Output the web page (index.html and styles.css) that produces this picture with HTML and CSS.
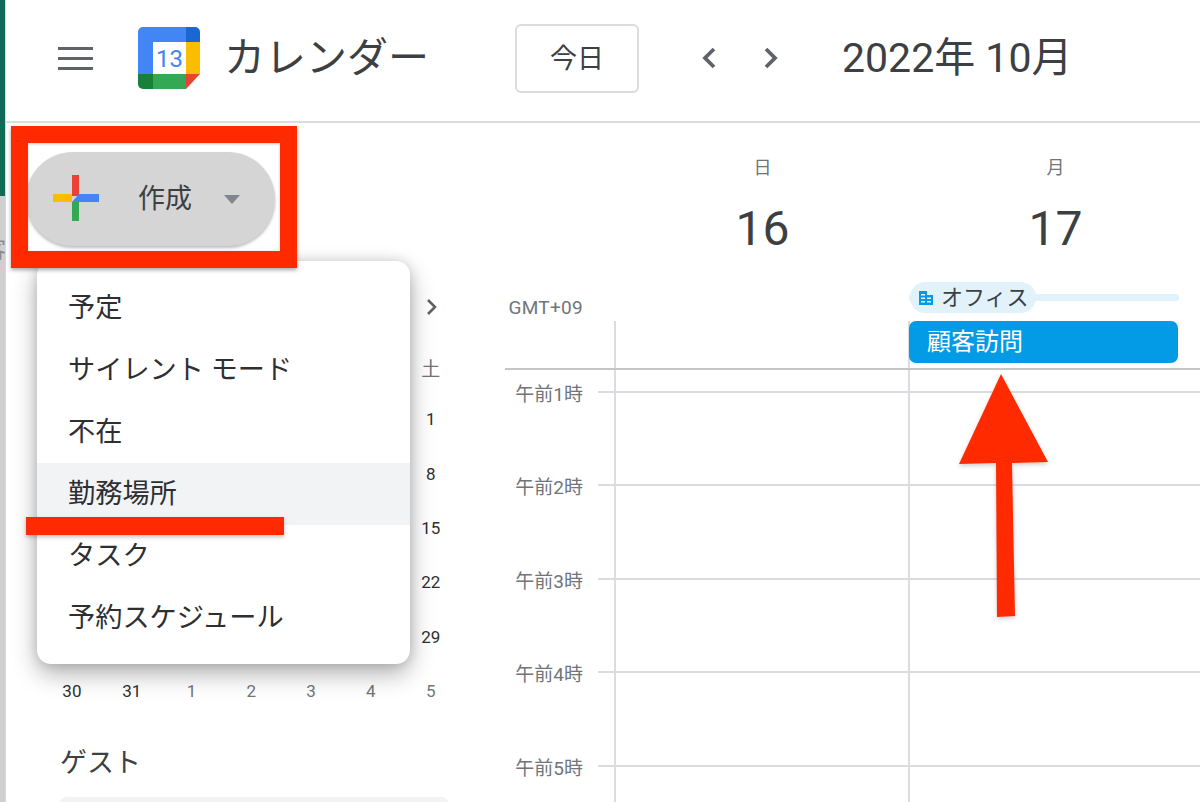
FILE: index.html
```html
<!DOCTYPE html>
<html lang="ja">
<head>
    <meta charset="UTF-8">
    <title>カレンダー</title>
    <link rel="stylesheet" href="styles.css">
</head>
<body>

<div class="page">
    <div class="desk-strip">
        <div class="desk-green"></div>
        <div class="desk-gray"><span class="desk-char">客</span></div>
    </div>

    <div class="app">
        <header class="topbar">
            <div class="hamburger"><span></span><span></span><span></span></div>
            <svg class="logo" viewBox="0 0 62 62" width="62" height="62">
                <path d="M5 0H48V15H15V47H0V5A5 5 0 0 1 5 0Z" fill="#4285f4"/>
                <path d="M48 0H57A5 5 0 0 1 62 5V15H48Z" fill="#1967d2"/>
                <rect x="48" y="15" width="14" height="32" fill="#fbbc04"/>
                <rect x="15" y="47" width="33" height="15" fill="#34a853"/>
                <path d="M0 47H15V62H5A5 5 0 0 1 0 57Z" fill="#188038"/>
                <path d="M48 47H62L48 62Z" fill="#ea4335"/>
                <rect x="15" y="15" width="33" height="32" fill="#fff"/>
                <text x="31.5" y="40" text-anchor="middle" class="logo-num">13</text>
            </svg>
            <div class="app-name">カレンダー</div>
            <button class="today-btn">今日</button>
            <svg class="nav-arrow first" viewBox="0 0 16 24" width="16" height="24"><path d="M13 3L4 12L13 21" fill="none" stroke="#5f6368" stroke-width="3.8"/></svg>
            <svg class="nav-arrow" viewBox="0 0 16 24" width="16" height="24"><path d="M3 3L12 12L3 21" fill="none" stroke="#5f6368" stroke-width="3.8"/></svg>
            <div class="month-title">2022年 10月</div>
        </header>

        <div class="content">
            <aside class="sidebar">
                <button class="create-btn">
                    <svg class="plus" viewBox="0 0 46 46" width="46" height="46">
                        <rect x="19" y="0" width="7" height="21" fill="#ea4335"/>
                        <rect x="0" y="19" width="19" height="8" fill="#fbbc04"/>
                        <rect x="19" y="27" width="7" height="19" fill="#34a853"/>
                        <path d="M19 27L26 19H46V27Z" fill="#4285f4"/>
                    </svg>
                    <span class="create-label">作成</span>
                    <span class="create-caret"></span>
                </button>

                <div class="mini-nav">
                    <svg viewBox="0 0 14 20" width="14" height="20"><path d="M3 3L10 10L3 17" fill="none" stroke="#5f6368" stroke-width="2.6"/></svg>
                </div>

                <div class="mini-cal">
                    <div class="blank"></div><div class="wd">土</div>
                    <div class="blank"></div><div>1</div>
                    <div class="blank"></div><div>8</div>
                    <div class="blank"></div><div>15</div>
                    <div class="blank"></div><div>22</div>
                    <div class="blank"></div><div>29</div>
                    <div>30</div><div>31</div><div class="off">1</div><div class="off">2</div><div class="off">3</div><div class="off">4</div><div class="off">5</div>
                </div>

                <h3 class="guest-title">ゲスト</h3>
                <div class="guest-search"></div>
            </aside>

            <main class="calendar">
                <div class="day-head">
                    <div></div>
                    <div class="day-col"><div class="day-name">日</div><div class="day-num">16</div></div>
                    <div class="day-col"><div class="day-name">月</div><div class="day-num">17</div></div>
                </div>

                <div class="allday">
                    <div class="tz">GMT+09</div>
                    <div class="chip-cell"></div>
                    <div class="chip-cell">
                        <div class="office-bar"></div>
                        <div class="office-chip">
                            <svg viewBox="0 0 16 16" width="16" height="16">
                                <path d="M1 1H9V5H15V15H1Z" fill="#039be5"/>
                                <path d="M3 4H7V5.5H3ZM3 7.5H7V9H3ZM9 7.5H13V9H9ZM3 11H7V12.5H3ZM9 11H13V12.5H9Z" fill="#e1f2fb"/>
                            </svg>
                            <span>オフィス</span>
                        </div>
                    </div>
                    <div class="event-cell"></div>
                    <div class="event-cell"><div class="event">顧客訪問</div></div>
                </div>

                <div class="hour-row lead"><div></div><div class="slot"></div><div class="slot"></div></div>
                <div class="hour-row"><div class="gutter"><span class="hour-label">午前1時</span><span class="tick"></span></div><div class="slot line"></div><div class="slot line"></div></div>
                <div class="hour-row"><div class="gutter"><span class="hour-label">午前2時</span><span class="tick"></span></div><div class="slot line"></div><div class="slot line"></div></div>
                <div class="hour-row"><div class="gutter"><span class="hour-label">午前3時</span><span class="tick"></span></div><div class="slot line"></div><div class="slot line"></div></div>
                <div class="hour-row"><div class="gutter"><span class="hour-label">午前4時</span><span class="tick"></span></div><div class="slot line"></div><div class="slot line"></div></div>
                <div class="hour-row"><div class="gutter"><span class="hour-label">午前5時</span><span class="tick"></span></div><div class="slot line"></div><div class="slot line"></div></div>
            </main>
        </div>
    </div>
</div>

<!-- dropdown over the sidebar -->
<div class="create-menu">
    <div class="menu-item">予定</div>
    <div class="menu-item">サイレント モード</div>
    <div class="menu-item">不在</div>
    <div class="menu-item active">勤務場所</div>
    <div class="menu-item">タスク</div>
    <div class="menu-item">予約スケジュール</div>
</div>

<!-- red annotations -->
<div class="mark-box"></div>
<div class="mark-line"></div>
<svg class="mark-arrow" viewBox="0 0 100 250" width="100" height="250">
    <path d="M46 3L4 93L41 92L42 246L60 245L57 92L93 91Z" fill="#ff2a00"/>
</svg>

</body>
</html>
```

FILE: styles.css
```css
* {
    box-sizing: border-box;
}
html, body {
    margin: 0;
    height: 100%;
    overflow: hidden;
}
body {
    font-family: Roboto, "Noto Sans CJK JP", sans-serif;
    background-color: #fff;
    color: #3c4043;
}
.page {
    display: flex;
    height: 802px;
}

/* sliver of the desktop behind the window */
.desk-strip {
    width: 6px;
    display: flex;
    flex-direction: column;
    border-right: 1px solid #d8d8d8;
    overflow: hidden;
}
.desk-green {
    height: 196px;
    background-color: #0f6a58;
}
.desk-gray {
    flex: 1;
    background-color: #cfcfcf;
    padding-top: 41px;
}
.desk-char {
    display: block;
    margin-left: -16px;
    font-size: 22px;
    line-height: 26px;
    color: #8a8a8a;
}

.app {
    flex: 1;
    min-width: 0;
}
.topbar {
    display: flex;
    align-items: center;
    height: 123px;
    padding-left: 52px;
    padding-bottom: 5px;
    border-bottom: 2px solid #dadce0;
}
.hamburger {
    width: 35px;
    display: flex;
    flex-direction: column;
    gap: 7px;
}
.hamburger span {
    height: 3px;
    background-color: #5f6368;
}
.logo {
    margin-left: 45px;
    flex-shrink: 0;
}
.logo-num {
    font-family: Roboto, sans-serif;
    font-size: 24px;
    fill: #4285f4;
}
.app-name {
    margin-left: 24px;
    font-size: 41px;
    line-height: 48px;
    width: 291px;
    white-space: nowrap;
}
.today-btn {
    width: 124px;
    height: 69px;
    padding-bottom: 4px;
    background-color: #fff;
    border: 2px solid #dadce0;
    border-radius: 6px;
    font-family: inherit;
    font-size: 27px;
    color: #3c4043;
}
.nav-arrow {
    margin-left: 46px;
}
.nav-arrow.first {
    margin-left: 62px;
}
.month-title {
    margin-left: 63px;
    margin-top: -8px;
    font-size: 41px;
    white-space: nowrap;
}

.content {
    display: flex;
    height: 679px;
    overflow: hidden;
}
.sidebar {
    width: 499px;
    flex-shrink: 0;
    padding-left: 20px;
}
.create-btn {
    display: flex;
    align-items: center;
    width: 249px;
    height: 94px;
    margin-top: 29px;
    padding: 0 0 0 27px;
    border: none;
    border-radius: 47px;
    background-color: #d5d5d5;
    box-shadow: 0 2px 3px rgba(0, 0, 0, 0.25);
    font-family: inherit;
}
.plus {
    margin-top: -2px;
}
.create-label {
    margin-left: 39px;
    margin-top: -6px;
    font-size: 27px;
    color: #3c4043;
}
.create-caret {
    margin-left: 32px;
    border-left: 8px solid transparent;
    border-right: 8px solid transparent;
    border-top: 9px solid #80868b;
}
.mini-nav {
    display: flex;
    justify-content: flex-end;
    height: 30px;
    width: 413px;
    margin-top: 46px;
    padding-top: 5px;
}
.mini-cal {
    display: grid;
    grid-template-columns: repeat(7, 59.8px);
    grid-template-rows: 50px repeat(6, 54.4px);
    margin-left: 16px;
    margin-top: 20px;
    font-size: 17px;
    text-align: center;
    color: #2d2f33;
}
.mini-cal div {
    display: flex;
    align-items: center;
    justify-content: center;
}
/* the cells under the open menu stay empty */
.mini-cal .blank {
    grid-column: span 6;
}
.mini-cal .wd {
    font-size: 19px;
    color: #70757a;
}
.mini-cal .off {
    color: #70757a;
}
.guest-title {
    margin: 27px 0 0 34px;
    font-size: 27px;
    line-height: 36px;
    font-weight: 400;
}
.guest-search {
    width: 388px;
    height: 50px;
    margin: 16px 0 0 34px;
    border-radius: 6px;
    background-color: #f1f3f4;
}

.calendar {
    flex: 1;
    min-width: 0;
}
.day-head {
    display: grid;
    grid-template-columns: 111px 293px 293px;
    height: 159px;
}
.day-col {
    text-align: center;
}
.day-name {
    margin-top: 33px;
    font-size: 18px;
    line-height: 24px;
    color: #70757a;
}
.day-num {
    margin-top: 20px;
    font-size: 48px;
    line-height: 58px;
}
.allday {
    display: grid;
    grid-template-columns: 109px 294px 294px;
    grid-template-rows: 39px 47px;
    width: 695px;
    border-bottom: 2px solid #c4c6c8;
}
.tz {
    grid-row: span 2;
    width: 78px;
    padding-top: 15px;
    font-size: 19px;
    letter-spacing: 0.3px;
    line-height: 22px;
    text-align: right;
    color: #70757a;
}
.chip-cell {
    position: relative;
}
.office-chip {
    position: relative;
    display: inline-flex;
    align-items: center;
    gap: 7px;
    height: 31px;
    padding: 0 7px 0 8px;
    margin-left: 2px;
    border-radius: 16px;
    background-color: #e1f2fb;
    font-size: 22px;
    line-height: 28px;
    color: #3c4043;
    white-space: nowrap;
}
.office-bar {
    position: absolute;
    left: 1px;
    top: 12px;
    width: 270px;
    height: 7px;
    border-radius: 3px;
    background-color: #e1f2fb;
}
.event-cell {
    border-left: 2px solid #dadce0;
}
.event {
    width: 269px;
    height: 42px;
    margin-left: -1px;
    padding-left: 18px;
    border-radius: 7px;
    background-color: #039be5;
    color: #fff;
    font-size: 24px;
    line-height: 42px;
}
.hour-row {
    display: grid;
    grid-template-columns: 109px 294px 294px;
    height: 93.4px;
}
.hour-row.lead {
    height: 21px;
}
.slot {
    border-left: 2px solid #dadce0;
}
.slot.line {
    border-top: 2px solid #dadce0;
}
.gutter {
    display: flex;
    align-items: flex-start;
}
.hour-label {
    width: 78px;
    margin-top: -8px;
    font-size: 19px;
    line-height: 24px;
    text-align: right;
    color: #70757a;
    white-space: nowrap;
}
.tick {
    width: 16px;
    height: 2px;
    margin-left: 15px;
    background-color: #dadce0;
}

.create-menu {
    position: absolute;
    left: 37px;
    top: 261px;
    width: 373px;
    padding: 16px 0 15px;
    border-radius: 14px;
    background-color: #fff;
    box-shadow: 0 10px 24px rgba(0, 0, 0, 0.3), 0 0 12px rgba(0, 0, 0, 0.14);
}
.menu-item {
    height: 62px;
    padding-left: 31px;
    font-size: 27.2px;
    line-height: 62px;
    color: #2d2f33;
    white-space: nowrap;
}
.menu-item.active {
    background-color: #f1f3f4;
}

.mark-box {
    position: absolute;
    left: 11px;
    top: 126px;
    width: 286px;
    height: 142px;
    border: 17px solid #ff2a00;
    box-shadow: 0 2px 4px rgba(0, 0, 0, 0.35), inset 0 1px 3px rgba(0, 0, 0, 0.2);
}
.mark-line {
    position: absolute;
    left: 26px;
    top: 517px;
    width: 258px;
    height: 18px;
    background-color: #ff2a00;
    box-shadow: 0 2px 4px rgba(0, 0, 0, 0.25);
}
.mark-arrow {
    position: absolute;
    left: 955px;
    top: 371px;
    filter: drop-shadow(0 2px 2px rgba(0, 0, 0, 0.2));
}
```
